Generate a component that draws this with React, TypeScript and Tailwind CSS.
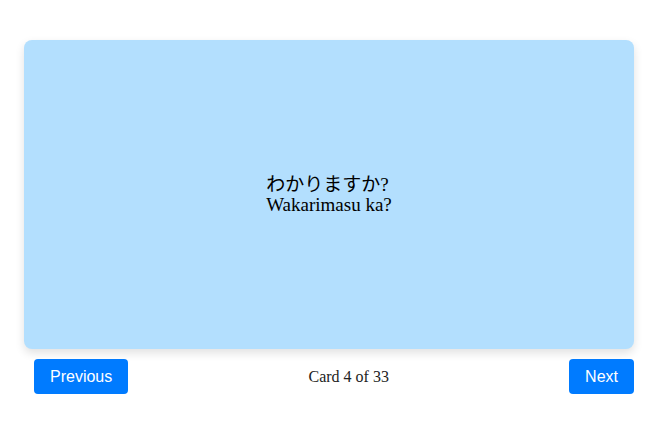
import React from "react";

export default function App() {
  return (
    <div className="w-[672px] h-[448px] bg-white pt-[40px] pl-[24px]" style={{ fontFamily: '"Liberation Serif", "Noto Sans CJK JP", serif' }}>
      <div className="w-[610px]">
        <div className="h-[309px] rounded-[8px] bg-[#b3dffe] shadow-[0_4px_10px_rgba(0,0,0,0.12)] flex items-center justify-center text-[19px] leading-[20px] text-black">
          <div className="text-left">
            わかりますか?
            <br />
            Wakarimasu ka?
          </div>
        </div>
        <div className="mt-[10px] flex items-center justify-between">
          <button className="ml-[10px] h-[35px] px-[16px] rounded-[4px] bg-[#007bff] text-white text-[16px]" style={{ fontFamily: '"Liberation Sans", Arial, sans-serif' }}>
            Previous
          </button>
          <span className="text-[16px] text-[#222]">Card 4 of 33</span>
          <button className="h-[35px] px-[16px] rounded-[4px] bg-[#007bff] text-white text-[16px]" style={{ fontFamily: '"Liberation Sans", Arial, sans-serif' }}>
            Next
          </button>
        </div>
      </div>
    </div>
  );
}
